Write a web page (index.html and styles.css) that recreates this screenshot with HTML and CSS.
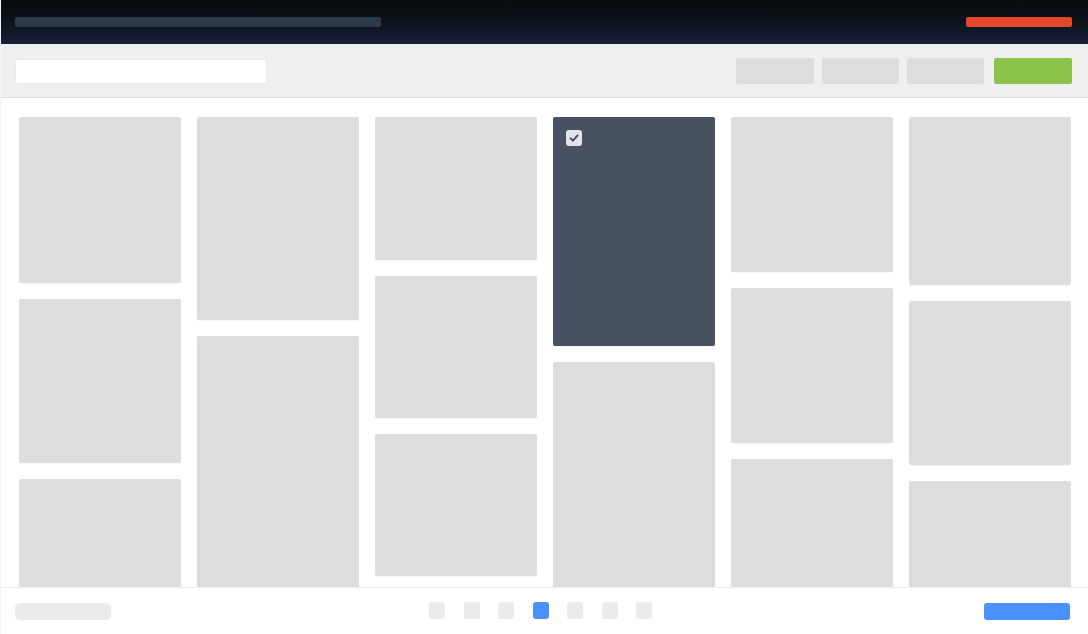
FILE: index.html
```html
<!DOCTYPE html>
<html>
<head>
<meta charset="utf-8">
<link rel="stylesheet" href="styles.css">
</head>
<body>
<div class="app">
  <header class="topbar">
    <div class="title-bar"></div>
    <div class="alert-bar"></div>
  </header>
  <div class="toolbar">
    <div class="search"></div>
    <div class="actions">
      <div class="btn"></div>
      <div class="btn"></div>
      <div class="btn"></div>
      <div class="btn btn-green"></div>
    </div>
  </div>
  <main class="grid">
    <div class="col">
      <div class="card" style="height:166px"></div>
      <div class="card" style="height:164px"></div>
      <div class="card" style="height:166px"></div>
    </div>
    <div class="col">
      <div class="card" style="height:203px"></div>
      <div class="card" style="height:260px"></div>
    </div>
    <div class="col">
      <div class="card" style="height:143px"></div>
      <div class="card" style="height:142px"></div>
      <div class="card" style="height:142px"></div>
      <div class="card" style="height:142px"></div>
    </div>
    <div class="col">
      <div class="card card-selected" style="height:229px">
        <span class="check">
          <svg width="12" height="12" viewBox="0 0 12 12"><path d="M2.5 6.3 L5 8.7 L9.6 3.4" fill="none" stroke="#3d4452" stroke-width="1.8" stroke-linecap="round" stroke-linejoin="round"/></svg>
        </span>
      </div>
      <div class="card" style="height:260px"></div>
    </div>
    <div class="col">
      <div class="card" style="height:155px"></div>
      <div class="card" style="height:155px"></div>
      <div class="card" style="height:160px"></div>
    </div>
    <div class="col">
      <div class="card" style="height:168px"></div>
      <div class="card" style="height:164px"></div>
      <div class="card" style="height:166px"></div>
    </div>
  </main>
  <footer class="footer">
    <div class="status"></div>
    <div class="pager">
      <span class="page"></span>
      <span class="page"></span>
      <span class="page"></span>
      <span class="page active"></span>
      <span class="page"></span>
      <span class="page"></span>
      <span class="page"></span>
    </div>
    <div class="primary"></div>
  </footer>
</div>
</body>
</html>
```
FILE: styles.css
```css
* { box-sizing: border-box; }
html, body { margin: 0; padding: 0; background: #ffffff; font-family: "Liberation Sans", Arial, sans-serif; }
.app {
  width: 1088px;
  height: 634px;
  display: flex;
  flex-direction: column;
  overflow: hidden;
  border-left: 1px solid #f4f4f4;
}
.topbar {
  height: 44px;
  flex: none;
  background: linear-gradient(180deg, #0a0b0d 0%, #0d1118 45%, #16203a 100%);
  display: flex;
  align-items: center;
  justify-content: space-between;
  padding: 0 16px 0 14px;
}
.title-bar {
  width: 366px;
  height: 10px;
  border-radius: 2px;
  background: #2c3a4d;
}
.alert-bar {
  width: 106px;
  height: 10px;
  border-radius: 2px;
  background: #e5472b;
}
.toolbar {
  height: 54px;
  flex: none;
  background: #efefef;
  border-bottom: 1px solid #dedede;
  display: flex;
  align-items: center;
  justify-content: space-between;
  padding: 1px 16px 0 14px;
}
.search {
  width: 252px;
  height: 25px;
  background: #ffffff;
  border-radius: 3px;
  border: 1px solid #e8e8e8;
}
.actions { display: flex; gap: 8px; align-items: center; }
.btn {
  width: 77px;
  height: 26px;
  background: #dddddd;
  border-radius: 2px;
}
.btn:first-child { width: 78px; }
.btn-green { background: #8bc34a; width: 78px; margin-left: 2px; }
.grid {
  flex: 1;
  min-height: 0;
  overflow: hidden;
  display: flex;
  gap: 16px;
  padding: 19px 16px 0 18px;
  align-items: flex-start;
}
.col {
  width: 162px;
  flex: none;
  display: flex;
  flex-direction: column;
  gap: 16px;
}
.card {
  background: #dddddd;
  border-radius: 2px;
  flex: none;
  box-shadow: 0 1px 1px rgba(0,0,0,0.04);
}
.card-selected {
  background: #475162;
  position: relative;
}
.check {
  position: absolute;
  left: 13px;
  top: 13px;
  width: 16px;
  height: 16px;
  border-radius: 3px;
  background: #e3e4e6;
  display: flex;
  align-items: center;
  justify-content: center;
}
.check svg { display: block; }
.footer {
  height: 47px;
  flex: none;
  border-top: 1px solid #eeeeee;
  background: #ffffff;
  display: flex;
  align-items: center;
  justify-content: space-between;
  padding: 0 18px 0 14px;
  position: relative;
}
.status {
  width: 96px;
  height: 17px;
  border-radius: 5px;
  background: #ebebeb;
}
.pager {
  display: flex;
  gap: 18.5px;
  position: absolute;
  left: 428px;
  top: 14px;
}
.page {
  width: 16px;
  height: 17px;
  border-radius: 3px;
  background: #ebebeb;
}
.page.active { background: #4a90ff; }
.primary {
  width: 86px;
  height: 17px;
  border-radius: 3px;
  background: #4a90ff;
}
```
